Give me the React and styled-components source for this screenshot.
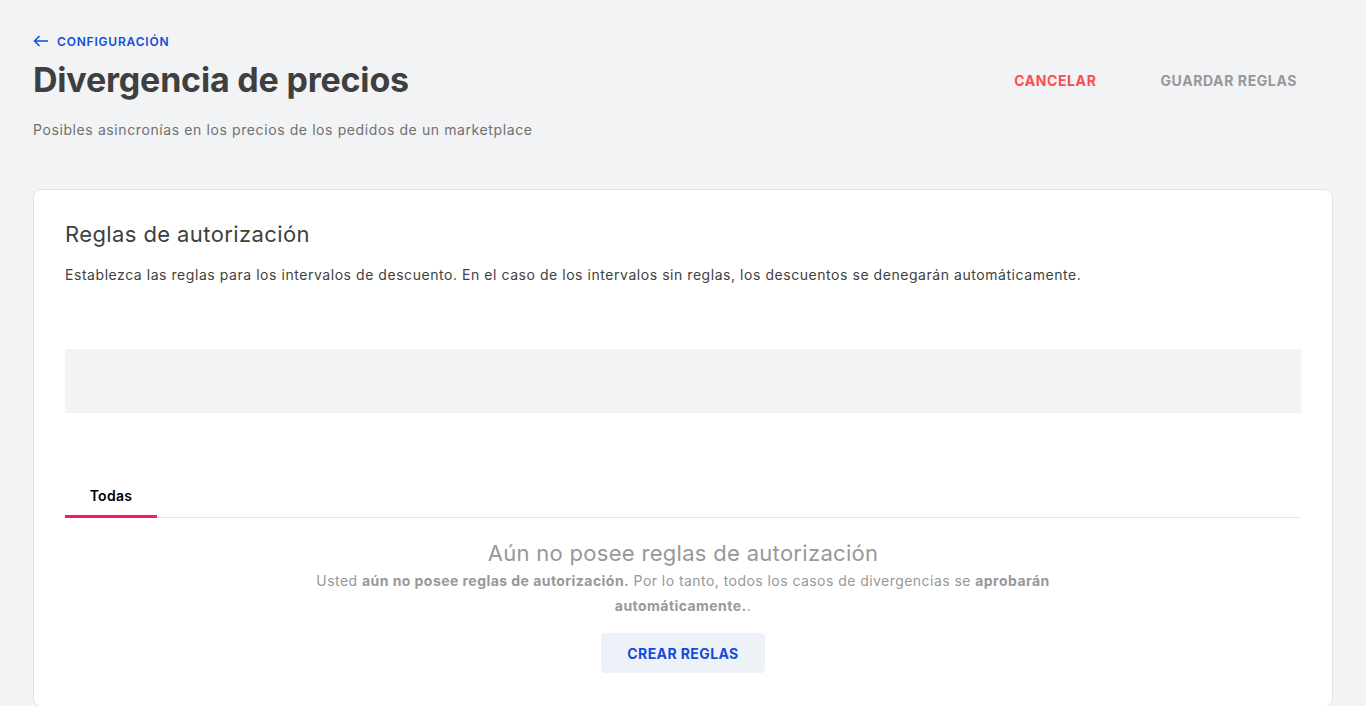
import React, { useState } from 'react';
import styled, { createGlobalStyle } from 'styled-components';

const GlobalStyle = createGlobalStyle`
  html, body {
    margin: 0;
    padding: 0;
    background: #f2f3f5;
    font-family: Inter, "Noto Sans", sans-serif;
    -webkit-font-smoothing: antialiased;
  }
  * { box-sizing: border-box; }
`;

const Page = styled.div`
  padding: 32px 33px 0 33px;
  min-height: 706px;
`;

const Header = styled.header`
  display: flex;
  justify-content: space-between;
  align-items: flex-start;
`;

const HeaderText = styled.div`
  display: flex;
  flex-direction: column;
`;

const BackLink = styled.a`
  display: inline-flex;
  align-items: center;
  gap: 8px;
  color: #134cd8;
  font-size: 12px;
  font-weight: 600;
  letter-spacing: 0.8px;
  text-transform: uppercase;
  text-decoration: none;
  height: 18px;
  cursor: pointer;
`;

const Title = styled.h1`
  margin: 8px 0 0;
  font-size: 34px;
  line-height: 44px;
  font-weight: 700;
  color: #3f3f40;
  letter-spacing: -0.2px;
`;

const Subtitle = styled.p`
  margin: 18px 0 0;
  font-size: 14px;
  line-height: 20px;
  color: #707070;
  letter-spacing: 0.6px;
`;

const Actions = styled.div`
  display: flex;
  gap: 32px;
  margin-top: 32px;
  margin-right: 20px;
`;

const TextButton = styled.button`
  background: none;
  border: 0;
  padding: 0 16px;
  height: 32px;
  font-family: inherit;
  font-size: 14px;
  font-weight: 700;
  text-transform: uppercase;
  letter-spacing: 0.6px;
  color: ${p => (p.$danger ? '#ff4c4c' : '#979899')};
  cursor: ${p => (p.$danger ? 'pointer' : 'default')};
`;

const Card = styled.section`
  margin-top: 49px;
  background: #fff;
  border: 1px solid #e3e4e6;
  border-radius: 8px;
  padding: 30px 31px 33px;
`;

const CardTitle = styled.h2`
  margin: 0;
  font-size: 22px;
  line-height: 28px;
  font-weight: 400;
  color: #3f3f40;
  letter-spacing: 0.4px;
`;

const CardText = styled.p`
  margin: 17px 0 0;
  font-size: 14px;
  line-height: 20px;
  color: #3f3f40;
  letter-spacing: 0.55px;
`;

const Placeholder = styled.div`
  margin-top: 64px;
  height: 64px;
  background: #f2f3f5;
`;

const Tabs = styled.div`
  margin-top: 69px;
  display: flex;
  border-bottom: 1px solid #e3e4e6;
`;

const Tab = styled.button`
  background: none;
  border: 0;
  border-bottom: 3px solid ${p => (p.$active ? '#f71963' : 'transparent')};
  margin-bottom: -1px;
  width: 92px;
  height: 36px;
  padding: 0 0 6px;
  font-family: inherit;
  font-size: 14px;
  font-weight: 600;
  letter-spacing: 0.3px;
  color: #000;
  cursor: pointer;
`;

const Empty = styled.div`
  display: flex;
  flex-direction: column;
  align-items: center;
  text-align: center;
  max-width: 760px;
  margin: 0 auto;
  padding-top: 21px;
`;

const EmptyTitle = styled.h3`
  margin: 0;
  font-size: 22px;
  line-height: 28px;
  font-weight: 400;
  letter-spacing: 0.3px;
  color: #979899;
`;

const EmptyText = styled.p`
  margin: 1px 0 0;
  font-size: 14px;
  line-height: 25px;
  letter-spacing: 0.45px;
  color: #979899;
  b { font-weight: 700; }
`;

const PrimaryLight = styled.button`
  margin-top: 15px;
  height: 40px;
  padding: 0 26px;
  border: 0;
  border-radius: 4px;
  background: #edf2f8;
  color: #134cd8;
  font-family: inherit;
  font-size: 14px;
  font-weight: 700;
  letter-spacing: 0.4px;
  text-transform: uppercase;
  cursor: pointer;
`;

const ArrowLeft = () => (
  <svg width="16" height="12" viewBox="0 0 16 12" fill="none">
    <path d="M15 6H1.5M6.5 1L1.5 6l5 5" stroke="#134cd8" strokeWidth="1.5" />
  </svg>
);

export default function App() {
  const [tab, setTab] = useState('all');

  return (
    <>
      <GlobalStyle />
      <Page>
        <Header>
          <HeaderText>
            <BackLink>
              <ArrowLeft />
              Configuración
            </BackLink>
            <Title>Divergencia de precios</Title>
            <Subtitle>Posibles asincronías en los precios de los pedidos de un marketplace</Subtitle>
          </HeaderText>
          <Actions>
            <TextButton $danger>Cancelar</TextButton>
            <TextButton>Guardar reglas</TextButton>
          </Actions>
        </Header>

        <Card>
          <CardTitle>Reglas de autorización</CardTitle>
          <CardText>
            Establezca las reglas para los intervalos de descuento. En el caso de los intervalos sin reglas, los descuentos se denegarán automáticamente.
          </CardText>
          <Placeholder />
          <Tabs>
            <Tab $active={tab === 'all'} onClick={() => setTab('all')}>Todas</Tab>
          </Tabs>
          <Empty>
            <EmptyTitle>Aún no posee reglas de autorización</EmptyTitle>
            <EmptyText>
              Usted <b>aún no posee reglas de autorización.</b> Por lo tanto, todos los casos de divergencias se <b>aprobarán automáticamente.</b>.
            </EmptyText>
            <PrimaryLight>Crear reglas</PrimaryLight>
          </Empty>
        </Card>
      </Page>
    </>
  );
}
